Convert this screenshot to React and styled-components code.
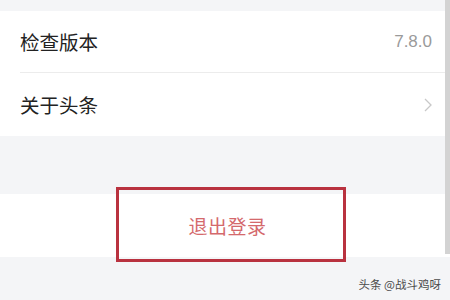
import React from 'react'
import styled, { createGlobalStyle } from 'styled-components'

const Global = createGlobalStyle`
  html, body { margin: 0; padding: 0; }
  body {
    font-family: "Noto Sans CJK SC", "Noto Sans", sans-serif;
    background: #f4f5f7;
  }
`

const Page = styled.div`
  position: relative;
  width: 450px;
  height: 300px;
  overflow: hidden;
  background: #f4f5f7;
  padding-top: 11px;
  box-sizing: border-box;
`

const Group = styled.div`
  background: #fff;
  margin-bottom: ${p => p.gap || 0}px;
`

const Row = styled.div`
  height: ${p => p.h}px;
  display: flex;
  align-items: center;
  justify-content: space-between;
  padding: 0 18px 0 20px;
  font-size: 19.5px;
  color: #222;
`

const Divider = styled.div`
  height: 1px;
  margin-left: 20px;
  background: #ececec;
`

const Value = styled.span`
  font-family: "Liberation Sans", sans-serif;
  font-size: 17px;
  color: #9a9a9a;
`

const LogoutRow = styled.div`
  height: 63px;
  display: flex;
  align-items: center;
  justify-content: center;
  padding-left: 5px;
  font-size: 19px;
  color: #d4696c;
  letter-spacing: 0.5px;
`

const Highlight = styled.div`
  position: absolute;
  left: 116px;
  top: 187px;
  width: 230px;
  height: 75px;
  box-sizing: border-box;
  border: 3px solid #b9323f;
`

const Scrollbar = styled.div`
  position: absolute;
  right: 0;
  top: 0;
  width: 5px;
  height: 254px;
  background: #d3d3d3;
`

const Watermark = styled.div`
  position: absolute;
  right: 9px;
  bottom: 8px;
  font-size: 11.5px;
  color: #4a4a4a;
`

const Chevron = () => (
  <svg width="8" height="14" viewBox="0 0 8 14">
    <path d="M1 1 L7 7 L1 13" fill="none" stroke="#c8c8c8" strokeWidth="1.3" />
  </svg>
)

export default function App() {
  return (
    <>
      <Global />
      <Page>
        <Group gap={58}>
          <Row h={61}>
            <span>检查版本</span>
            <Value>7.8.0</Value>
          </Row>
          <Divider />
          <Row h={63}>
            <span>关于头条</span>
            <Chevron />
          </Row>
        </Group>
        <Group>
          <LogoutRow>退出登录</LogoutRow>
        </Group>
        <Highlight />
        <Scrollbar />
        <Watermark>头条 @战斗鸡呀</Watermark>
      </Page>
    </>
  )
}
